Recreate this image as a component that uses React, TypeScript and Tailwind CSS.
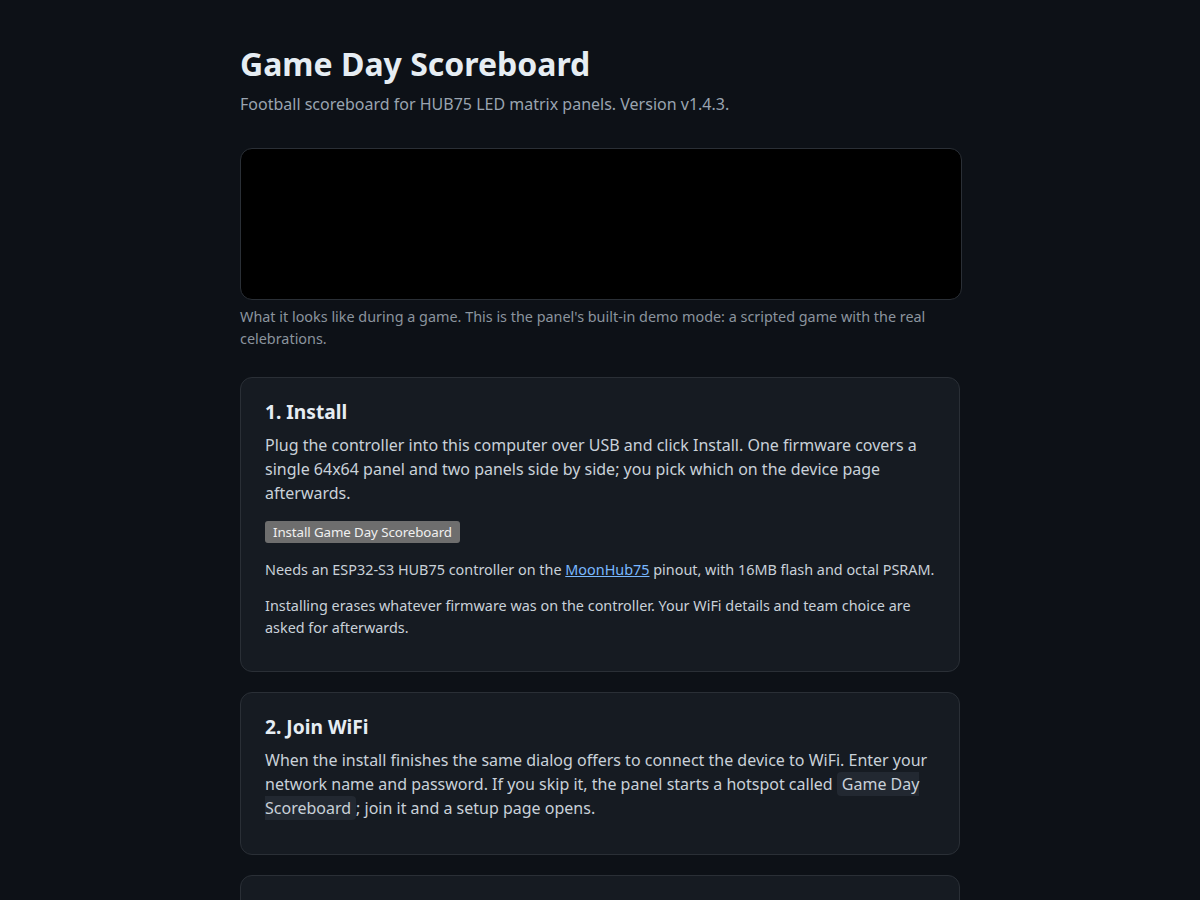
const Code = ({ children }: { children: React.ReactNode }) => (
  <code className="rounded bg-[#222831] px-[5px] py-px font-[inherit]">{children}</code>
);

const App = () => {
  return (
    <div className="min-h-[900px] bg-[#0d1117] text-[#e6edf3]" style={{ fontFamily: '"Noto Sans", sans-serif' }}>
      <main className="mx-auto w-[720px] pt-[38px] pb-10">
        <h1 className="text-[32px] font-bold leading-[52px]">Game Day Scoreboard</h1>
        <p className="mt-[2px] text-[16px] leading-6 text-[#9aa4b0]">
          Football scoreboard for HUB75 LED matrix panels. Version v1.4.3.
        </p>

        <div className="mt-[32px] h-[152px] w-[722px] rounded-xl border border-[#2a2f36] bg-black" />
        <p className="mt-[6px] text-[14.4px] leading-[22px] text-[#8b949e]">
          What it looks like during a game. This is the panel's built-in demo mode: a scripted game with the real
          celebrations.
        </p>

        <section className="mt-[27px] rounded-xl border border-[#2a2f36] bg-[#161b22] px-6 pt-[20px] pb-[24px]">
          <h2 className="text-[19.2px] font-bold leading-[28px]">1. Install</h2>
          <p className="mt-[7px] text-[16px] leading-6 text-[#c9d1d9]">
            Plug the controller into this computer over USB and click Install. One firmware covers a single 64x64
            panel and two panels side by side; you pick which on the device page afterwards.
          </p>
          <button className="mt-[16px] rounded-[3px] bg-[#6e6e6e] px-2 py-px text-[13.333px] leading-[20px] tracking-[-0.1px] text-[#f0f0f0]">
            Install Game Day Scoreboard
          </button>
          <p className="mt-[16px] text-[14.4px] leading-[21.6px] text-[#c9d1d9]">
            Needs an ESP32-S3 HUB75 controller on the{" "}
            <a href="#" className="text-[#79b8ff] underline">
              MoonHub75
            </a>{" "}
            pinout, with 16MB flash and octal PSRAM.
          </p>
          <p className="mt-[14.4px] mb-[9px] text-[14.4px] leading-[21.6px] text-[#c9d1d9]">
            Installing erases whatever firmware was on the controller. Your WiFi details and team choice are asked for
            afterwards.
          </p>
        </section>

        <section className="mt-[20px] rounded-xl border border-[#2a2f36] bg-[#161b22] px-6 pt-[20px] pb-[24px]">
          <h2 className="text-[19.2px] font-bold leading-[28px]">2. Join WiFi</h2>
          <p className="mt-[7px] mb-[10px] text-[16px] leading-6 text-[#c9d1d9]">
            When the install finishes the same dialog offers to connect the device to WiFi. Enter your network name and
            password. If you skip it, the panel starts a hotspot called <Code>Game Day Scoreboard</Code>; join it and a
            setup page opens.
          </p>
        </section>

        <section className="mt-[20px] h-[200px] rounded-xl border border-[#2a2f36] bg-[#161b22] px-6 pt-[20px]" />
      </main>
    </div>
  );
};

export default App;
